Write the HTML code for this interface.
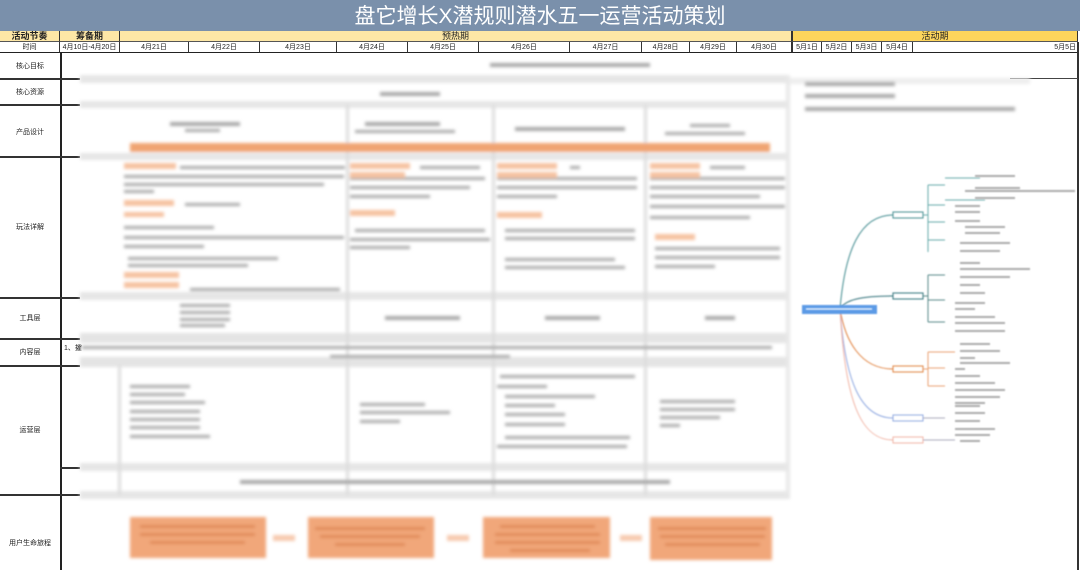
<!DOCTYPE html>
<html><head><meta charset="utf-8">
<style>
*{margin:0;padding:0;box-sizing:border-box}
body{width:1080px;height:570px;overflow:hidden;background:#fff;position:relative;font-family:"Liberation Sans","Noto Sans CJK SC",sans-serif;color:#222}
.a{position:absolute}
.title{left:0;top:0;width:1080px;height:31px;background:#7a90ab;color:#fff;font-size:21px;text-align:center;line-height:33px;letter-spacing:0}
.c{position:absolute;font-size:8px;text-align:center;border-right:1px solid #333;white-space:nowrap;overflow:hidden}
.r1{top:31px;height:11px;line-height:11px;font-size:9px;font-weight:bold;border-bottom:1px solid #555}
.r2{top:42px;height:11px;line-height:11px;font-size:7px;border-bottom:1.5px solid #222}
.lab{position:absolute;left:0;width:60px;font-size:7px;text-align:center}
.hl{position:absolute;left:0;width:80px;height:1.5px;background:#333}
</style></head><body>
<div class="a title">盘它增长X潜规则潜水五一运营活动策划</div>
<div class="c r1" style="left:0;width:60px;background:#fde7a6">活动节奏</div>
<div class="c r1" style="left:60px;width:60px;background:#fde7a6">筹备期</div>
<div class="c r1" style="left:120px;width:672px;background:#fde7a6;font-weight:normal">预热期</div>
<div class="c r1" style="left:792px;width:286px;background:#fdd55c;border-left:1px solid #333;font-weight:normal">活动期</div>
<div class="c r2" style="left:0;width:60px">时间</div>
<div class="c r2" style="left:60px;width:60px">4月10日-4月20日</div>
<div class="c r2" style="left:120px;width:69px">4月21日</div>
<div class="c r2" style="left:189px;width:71px">4月22日</div>
<div class="c r2" style="left:260px;width:77px">4月23日</div>
<div class="c r2" style="left:337px;width:71px">4月24日</div>
<div class="c r2" style="left:408px;width:71px">4月25日</div>
<div class="c r2" style="left:479px;width:91px">4月26日</div>
<div class="c r2" style="left:570px;width:72px">4月27日</div>
<div class="c r2" style="left:642px;width:48px">4月28日</div>
<div class="c r2" style="left:690px;width:47px">4月29日</div>
<div class="c r2" style="left:737px;width:55px">4月30日</div>
<div class="c r2" style="left:792px;width:30px;border-left:1px solid #333">5月1日</div>
<div class="c r2" style="left:822px;width:30px">5月2日</div>
<div class="c r2" style="left:852px;width:30px">5月3日</div>
<div class="c r2" style="left:882px;width:31px">5月4日</div>
<div class="c r2" style="left:913px;width:165px;text-align:right;padding-right:1px">5月5日</div>
<div class="a" style="left:60px;top:52px;width:1.5px;height:518px;background:#222"></div>
<div class="a" style="left:1077px;top:42px;width:1.5px;height:528px;background:#333"></div>
<div class="a" style="left:1010px;top:78px;width:68px;height:1px;background:#444"></div>
<div class="lab" style="top:61px">核心目标</div>
<div class="hl" style="top:78px"></div>
<div class="lab" style="top:87px">核心资源</div>
<div class="hl" style="top:104px"></div>
<div class="lab" style="top:127px">产品设计</div>
<div class="hl" style="top:156px"></div>
<div class="lab" style="top:222px">玩法详解</div>
<div class="hl" style="top:297px"></div>
<div class="lab" style="top:313px">工具层</div>
<div class="hl" style="top:338px"></div>
<div class="lab" style="top:347px">内容层</div>
<div class="hl" style="top:365px"></div>
<div class="lab" style="top:425px">运营层</div>
<div class="a" style="left:60px;top:467px;width:20px;height:1.5px;background:#333"></div>
<div class="hl" style="top:494px"></div>
<div class="lab" style="top:538px">用户生命旅程</div>
<div class="a" style="left:64px;top:343px;font-size:7px">1、攉</div>
<svg class="a" style="left:0;top:0" width="1080" height="570">
<defs><filter id="b" x="-5%" y="-5%" width="110%" height="110%"><feGaussianBlur stdDeviation="1.6"/></filter>
<filter id="b2"><feGaussianBlur stdDeviation="0.8"/></filter></defs>
<g filter="url(#b)">
<rect x="80" y="75" width="710" height="8" fill="#e6e6e6"/>
<rect x="80" y="101" width="710" height="7" fill="#e6e6e6"/>
<rect x="80" y="153" width="710" height="7" fill="#e6e6e6"/>
<rect x="80" y="292" width="710" height="8" fill="#e6e6e6"/>
<rect x="80" y="333" width="710" height="10" fill="#e4e4e4"/>
<rect x="80" y="357" width="710" height="10" fill="#e4e4e4"/>
<rect x="80" y="463" width="710" height="8" fill="#e6e6e6"/>
<rect x="80" y="491" width="710" height="8" fill="#e6e6e6"/>
<rect x="346" y="105" width="3" height="390" fill="#ddd"/>
<rect x="492" y="105" width="3" height="390" fill="#ddd"/>
<rect x="644" y="105" width="3" height="390" fill="#ddd"/>
<rect x="118" y="365" width="3" height="130" fill="#ddd"/>
<rect x="786" y="75" width="4" height="420" fill="#e8e8e8"/>
<rect x="790" y="78" width="240" height="6" fill="#eee"/>
<rect x="130" y="143" width="640" height="9" fill="#f0a472"/>
<g fill="#a8a8a8">
<rect x="490" y="63" width="160" height="4"/>
<rect x="380" y="92" width="60" height="4"/>
<rect x="170" y="122" width="70" height="4"/><rect x="185" y="129" width="35" height="3"/>
<rect x="365" y="122" width="75" height="4"/><rect x="355" y="130" width="100" height="3"/>
<rect x="515" y="127" width="110" height="4"/>
<rect x="690" y="124" width="40" height="3"/><rect x="665" y="132" width="80" height="3"/>
<rect x="805" y="82" width="90" height="4"/><rect x="805" y="94" width="90" height="4"/><rect x="805" y="107" width="210" height="4"/>
<rect x="180" y="166" width="165" height="3"/><rect x="124" y="175" width="220" height="3"/><rect x="124" y="183" width="200" height="3"/><rect x="124" y="190" width="30" height="3"/>
<rect x="185" y="203" width="55" height="3"/>
<rect x="124" y="226" width="90" height="3"/><rect x="124" y="236" width="220" height="3"/><rect x="124" y="245" width="80" height="3"/><rect x="128" y="257" width="150" height="3"/><rect x="128" y="264" width="120" height="3"/><rect x="190" y="288" width="150" height="3"/>
<rect x="420" y="166" width="60" height="3"/><rect x="350" y="177" width="135" height="3"/><rect x="350" y="186" width="120" height="3"/><rect x="350" y="195" width="80" height="3"/><rect x="355" y="229" width="130" height="3"/><rect x="350" y="238" width="140" height="3"/><rect x="350" y="246" width="60" height="3"/>
<rect x="570" y="166" width="10" height="3"/><rect x="497" y="177" width="140" height="3"/><rect x="497" y="186" width="140" height="3"/><rect x="497" y="195" width="60" height="3"/><rect x="505" y="229" width="130" height="3"/><rect x="505" y="237" width="130" height="3"/><rect x="505" y="258" width="110" height="3"/><rect x="505" y="266" width="120" height="3"/>
<rect x="710" y="166" width="35" height="3"/><rect x="650" y="177" width="135" height="3"/><rect x="650" y="186" width="135" height="3"/><rect x="650" y="195" width="110" height="3"/><rect x="650" y="205" width="135" height="3"/><rect x="650" y="216" width="100" height="3"/><rect x="655" y="247" width="125" height="3"/><rect x="655" y="256" width="125" height="3"/><rect x="655" y="265" width="60" height="3"/>
<rect x="180" y="304" width="50" height="3"/><rect x="180" y="311" width="50" height="3"/><rect x="180" y="318" width="50" height="3"/><rect x="180" y="324" width="45" height="3"/>
<rect x="385" y="316" width="75" height="4"/><rect x="545" y="316" width="55" height="4"/><rect x="705" y="316" width="30" height="4"/>
<rect x="82" y="346" width="690" height="3"/><rect x="330" y="355" width="180" height="3"/>
<rect x="130" y="385" width="60" height="3"/><rect x="130" y="393" width="55" height="3"/><rect x="130" y="401" width="75" height="3"/><rect x="130" y="410" width="70" height="3"/><rect x="130" y="418" width="70" height="3"/><rect x="130" y="426" width="70" height="3"/><rect x="130" y="435" width="80" height="3"/>
<rect x="360" y="403" width="65" height="3"/><rect x="360" y="411" width="90" height="3"/><rect x="360" y="420" width="40" height="3"/>
<rect x="500" y="375" width="135" height="3"/><rect x="497" y="385" width="50" height="3"/><rect x="505" y="395" width="90" height="3"/><rect x="505" y="404" width="50" height="3"/><rect x="505" y="413" width="60" height="3"/><rect x="505" y="423" width="60" height="3"/><rect x="505" y="436" width="125" height="3"/><rect x="497" y="445" width="130" height="3"/>
<rect x="660" y="400" width="75" height="3"/><rect x="660" y="408" width="75" height="3"/><rect x="660" y="416" width="60" height="3"/><rect x="660" y="424" width="20" height="3"/>
<rect x="240" y="480" width="430" height="4"/>
</g>
<g fill="#f1a77a">
<rect x="130" y="517" width="136" height="41"/><rect x="308" y="517" width="126" height="41"/><rect x="483" y="517" width="127" height="41"/><rect x="650" y="517" width="122" height="43"/>
<rect x="273" y="535" width="22" height="6" opacity=".6"/><rect x="447" y="535" width="22" height="6" opacity=".6"/><rect x="620" y="535" width="22" height="6" opacity=".6"/>
</g>
<g fill="#e08a58">
<rect x="140" y="525" width="115" height="3"/><rect x="140" y="533" width="115" height="3"/><rect x="150" y="541" width="95" height="3"/>
<rect x="315" y="527" width="110" height="3"/><rect x="320" y="535" width="100" height="3"/><rect x="335" y="543" width="70" height="3"/>
<rect x="500" y="525" width="95" height="3"/><rect x="495" y="533" width="105" height="3"/><rect x="495" y="541" width="105" height="3"/><rect x="510" y="549" width="80" height="3"/>
<rect x="658" y="527" width="108" height="3"/><rect x="660" y="535" width="105" height="3"/><rect x="665" y="543" width="95" height="3"/>
</g>
<g fill="#f6c3a2"><rect x="124" y="163" width="52" height="6"/><rect x="124" y="200" width="50" height="6"/><rect x="124" y="212" width="40" height="5"/><rect x="124" y="272" width="55" height="6"/><rect x="124" y="282" width="55" height="6"/>
<rect x="350" y="163" width="60" height="6"/><rect x="350" y="172" width="55" height="6"/><rect x="350" y="210" width="45" height="6"/>
<rect x="497" y="163" width="60" height="6"/><rect x="497" y="172" width="60" height="6"/><rect x="497" y="212" width="45" height="6"/>
<rect x="650" y="163" width="50" height="6"/><rect x="650" y="172" width="50" height="6"/><rect x="655" y="234" width="40" height="6"/></g>
</g>
<g filter="url(#b2)" fill="none" stroke-width="1">
<path d="M840 309 C845 250 860 215 893 215" stroke="#3f8a8e"/>
<path d="M840 309 C845 300 860 296 893 296" stroke="#2f6f78"/>
<path d="M840 309 C845 340 860 369 893 369" stroke="#e0813e"/>
<path d="M840 309 C845 380 860 418 893 418" stroke="#8fa8e0"/>
<path d="M840 309 C845 400 860 440 893 440" stroke="#f1b4a4"/>
<rect x="893" y="212" width="30" height="6" stroke="#3f8a8e"/>
<rect x="893" y="293" width="30" height="6" stroke="#2f6f78"/>
<rect x="893" y="366" width="30" height="6" stroke="#e0813e"/>
<rect x="893" y="415" width="30" height="6" stroke="#8fa8e0"/>
<rect x="893" y="437" width="30" height="6" stroke="#f1b4a4"/>
<path d="M923 215 L928 215 M928 185 L928 252 M928 185 L945 185 M928 205 L945 205 M928 222 L945 222 M928 240 L945 240 M945 178 L980 178 M945 200 L985 200" stroke="#6aa"/>
<path d="M923 296 L928 296 M928 275 L928 322 M928 275 L945 275 M928 300 L945 300 M928 322 L945 322" stroke="#588"/>
<path d="M923 369 L928 369 M928 352 L928 386 M928 352 L955 352 M928 368 L945 368 M928 386 L945 386" stroke="#e9a070"/>
<path d="M923 418 L945 418 M923 440 L955 440" stroke="#aab"/>
</g>
<g fill="#aaa" filter="url(#b2)">
<rect x="975" y="175" width="40" height="2"/><rect x="975" y="187" width="45" height="2"/><rect x="965" y="190" width="110" height="2"/><rect x="975" y="197" width="40" height="2"/>
<rect x="955" y="205" width="25" height="2"/><rect x="955" y="211" width="25" height="2"/><rect x="955" y="220" width="25" height="2"/><rect x="965" y="226" width="40" height="2"/><rect x="965" y="232" width="35" height="2"/><rect x="960" y="242" width="50" height="2"/><rect x="960" y="250" width="40" height="2"/>
<rect x="960" y="262" width="20" height="2"/><rect x="960" y="268" width="70" height="2"/><rect x="960" y="276" width="50" height="2"/><rect x="960" y="284" width="20" height="2"/><rect x="960" y="292" width="25" height="2"/>
<rect x="955" y="302" width="30" height="2"/><rect x="955" y="308" width="20" height="2"/><rect x="955" y="316" width="40" height="2"/><rect x="955" y="322" width="50" height="2"/><rect x="955" y="330" width="50" height="2"/>
<rect x="960" y="343" width="30" height="2"/><rect x="960" y="350" width="40" height="2"/><rect x="960" y="357" width="15" height="2"/><rect x="960" y="362" width="50" height="2"/><rect x="955" y="368" width="10" height="2"/>
<rect x="955" y="375" width="25" height="2"/><rect x="955" y="382" width="40" height="2"/><rect x="955" y="389" width="50" height="2"/><rect x="955" y="396" width="45" height="2"/><rect x="955" y="402" width="30" height="2"/>
<rect x="955" y="405" width="25" height="2"/><rect x="955" y="412" width="30" height="2"/><rect x="955" y="420" width="25" height="2"/><rect x="955" y="428" width="40" height="2"/><rect x="955" y="434" width="35" height="2"/><rect x="960" y="440" width="20" height="2"/>
</g>
<rect x="802" y="305" width="75" height="9" fill="#5b9ae6" filter="url(#b2)"/>
<rect x="806" y="308" width="66" height="2" fill="#cfe2fa" filter="url(#b2)"/>
</svg>
</body></html>
